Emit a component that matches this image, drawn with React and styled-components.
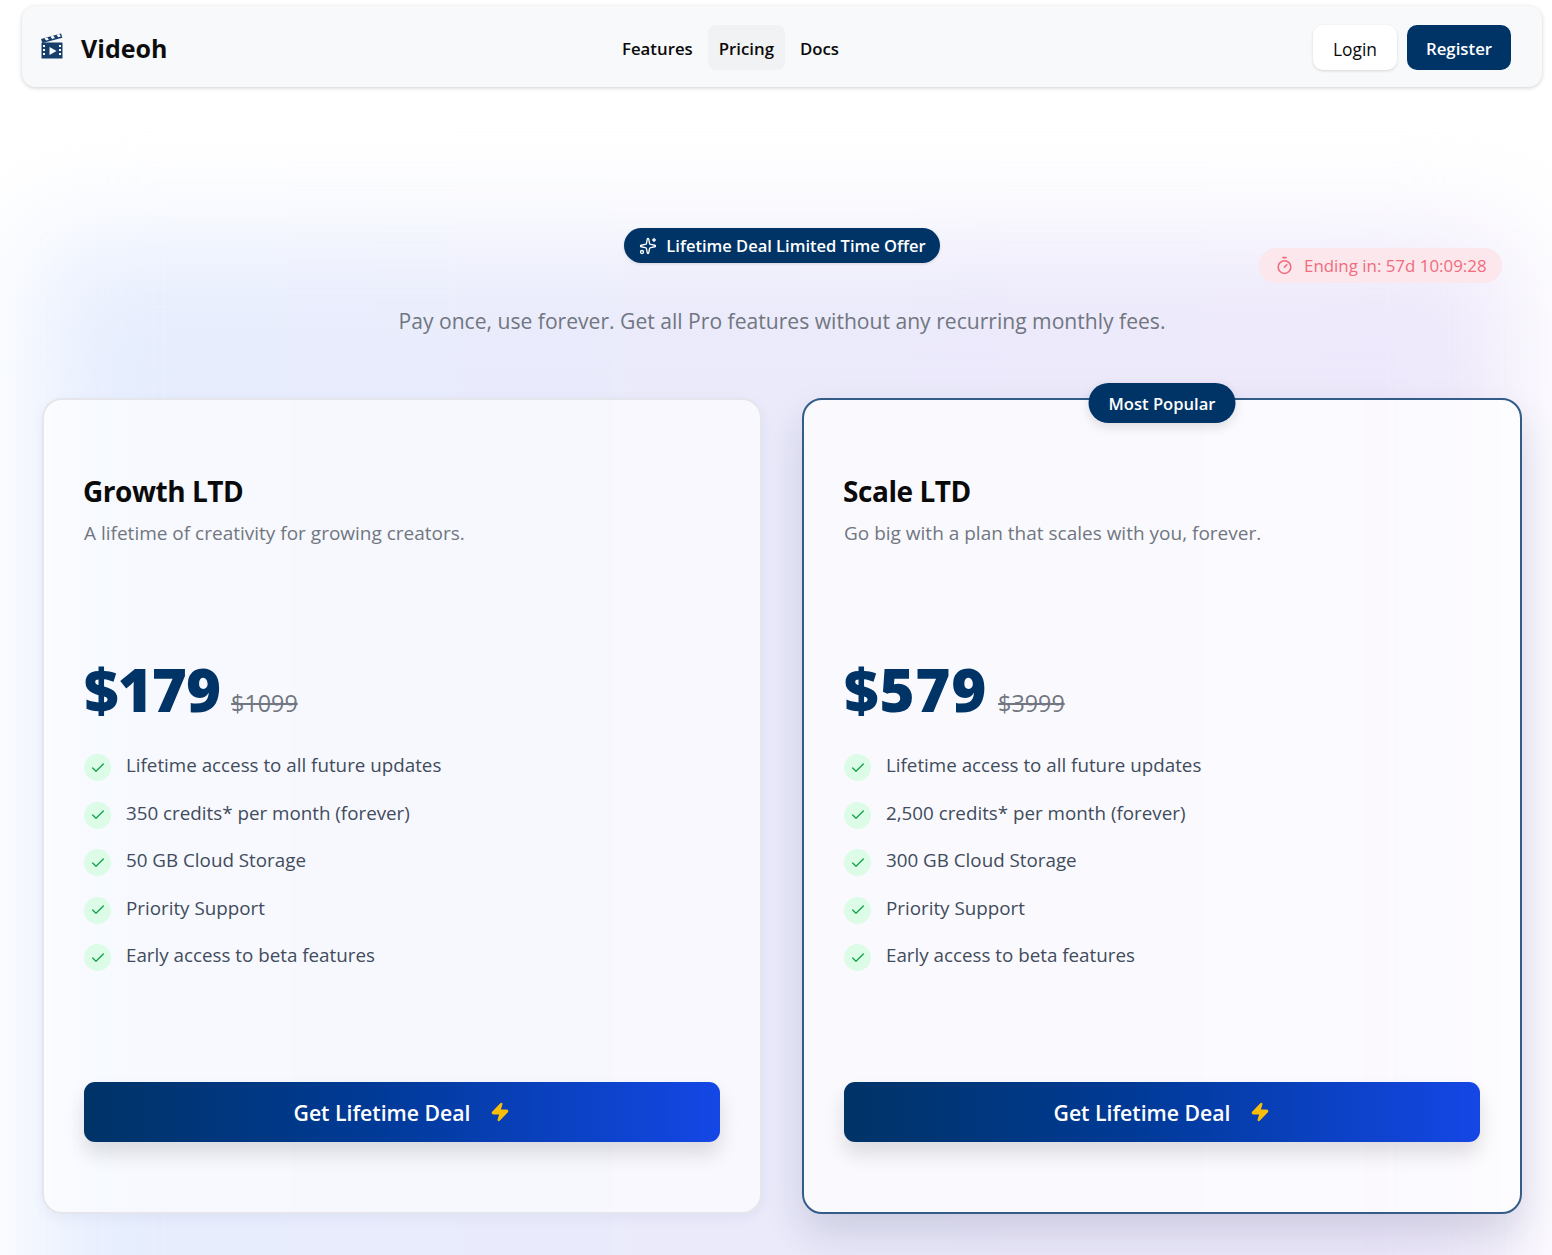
import styled, { createGlobalStyle } from "styled-components";
import { Check, Sparkles, Timer, Zap } from "lucide-react";

const GlobalStyle = createGlobalStyle`
  html, body {
    margin: 0;
    padding: 0;
    background: #ffffff;
    font-family: "Open Sans", "Noto Sans", sans-serif;
  }
  * { box-sizing: border-box; }
`;

const plans = [
  {
    name: "Growth LTD",
    text: "A lifetime of creativity for growing creators.",
    price: "$179",
    tracking: -1,
    old: "$1099",
    credits: "350 credits* per month (forever)",
    storage: "50 GB Cloud Storage",
  },
  {
    name: "Scale LTD",
    text: "Go big with a plan that scales with you, forever.",
    price: "$579",
    tracking: 0.75,
    old: "$3999",
    credits: "2,500 credits* per month (forever)",
    storage: "300 GB Cloud Storage",
    popular: true,
  },
];

function Logo() {
  return (
    <svg width="24" height="26" viewBox="0 0 24 26">
      <g fill="#163f6c">
        <path d="M1 6 21 .5l1.4 4.2L2.4 10z" />
        <rect x="1.5" y="9.5" width="21" height="16" rx="0.5" />
      </g>
      <g fill="#ffffff">
        <path d="M4.5 5.2 7.3 4.4l1.6 2.4-2.8.8zM10.5 3.5l2.8-.8 1.6 2.4-2.8.8zM16.5 1.8l2.8-.8 1.6 2.4-2.8.8z" />
        <path d="M9.5 14 16.5 18l-7 4z" />
        <rect x="3" y="12" width="2" height="2" />
        <rect x="3" y="16" width="2" height="2" />
        <rect x="3" y="20" width="2" height="2" />
        <rect x="19" y="12" width="2" height="2" />
        <rect x="19" y="16" width="2" height="2" />
        <rect x="19" y="20" width="2" height="2" />
      </g>
    </svg>
  );
}

function Plan({ plan }) {
  const features = [
    "Lifetime access to all future updates",
    plan.credits,
    plan.storage,
    "Priority Support",
    "Early access to beta features",
  ];
  return (
    <Card $popular={plan.popular}>
      {plan.popular && <PopularBadge>Most Popular</PopularBadge>}
      <PlanName>{plan.name}</PlanName>
      <PlanText>{plan.text}</PlanText>
      <PriceRow>
        <Price $tracking={plan.tracking}>{plan.price}</Price>
        <OldPrice>{plan.old}</OldPrice>
      </PriceRow>
      <Features>
        {features.map((f) => (
          <Feature key={f}>
            <CheckDot>
              <Check size={16} color="#16a34a" strokeWidth={2} />
            </CheckDot>
            <span>{f}</span>
          </Feature>
        ))}
      </Features>
      <DealButton>
        Get Lifetime Deal
        <Zap size={20} color="#fbbf09" fill="#fbbf09" />
      </DealButton>
    </Card>
  );
}

export default function App() {
  return (
    <>
      <GlobalStyle />
      <Nav>
        <Brand>
          <Logo />
          <BrandName>Videoh</BrandName>
        </Brand>
        <Links>
          <NavLink>Features</NavLink>
          <NavLink $active>Pricing</NavLink>
          <NavLink>Docs</NavLink>
        </Links>
        <Actions>
          <LoginButton>Login</LoginButton>
          <RegisterButton>Register</RegisterButton>
        </Actions>
      </Nav>
      <Hero>
        <Glow />
        <Offer>
          <Sparkles size={18} strokeWidth={1.75} />
          Lifetime Deal Limited Time Offer
        </Offer>
        <Ending>
          <Timer size={19} strokeWidth={2} />
          Ending in: 57d 10:09:28
        </Ending>
        <Lead>Pay once, use forever. Get all Pro features without any recurring monthly fees.</Lead>
        <Cards>
          {plans.map((p) => (
            <Plan key={p.name} plan={p} />
          ))}
        </Cards>
      </Hero>
    </>
  );
}

const Nav = styled.nav`
  width: 1520px;
  height: 81px;
  margin: 6px 0 0 22px;
  padding: 2px 31px 0 18px;
  display: flex;
  align-items: center;
  background: #f8f9fb;
  border-radius: 14px;
  box-shadow: 0 1px 4px rgba(0, 0, 0, 0.18);
  position: relative;
  z-index: 1;
`;

const Brand = styled.div`
  width: 571px;
  display: flex;
  align-items: center;
  gap: 17px;
  margin-top: -4px;
`;

const BrandName = styled.span`
  font-size: 25px;
  font-weight: 700;
  color: #0d0d0d;
  margin-top: 4px;
`;

const Links = styled.div`
  display: flex;
  align-items: center;
  gap: 4px;
`;

const NavLink = styled.a`
  padding: 0 11px;
  height: 45px;
  line-height: 47px;
  font-size: 16.8px;
  font-weight: 600;
  color: #0a0a0a;
  border-radius: 8px;
  background: ${(p) => (p.$active ? "#f1f2f4" : "transparent")};
`;

const Actions = styled.div`
  margin-left: auto;
  display: flex;
  gap: 10px;
`;

const LoginButton = styled.button`
  width: 84px;
  height: 45px;
  padding: 2px 0 0;
  border: 0;
  border-radius: 10px;
  background: #ffffff;
  font: 500 17.4px "Open Sans", sans-serif;
  color: #0a0a0a;
  box-shadow: 0 1px 3px rgba(0, 0, 0, 0.14);
`;

const RegisterButton = styled.button`
  width: 104px;
  height: 45px;
  padding: 2px 0 0;
  border: 0;
  border-radius: 10px;
  background: #003366;
  font: 600 16.8px "Open Sans", sans-serif;
  color: #ffffff;
`;

const Hero = styled.main`
  position: relative;
  height: 1168px;
  padding: 141px 30px 0 42px;
  display: flex;
  flex-direction: column;
  align-items: center;
  overflow: hidden;
`;

const Glow = styled.div`
  position: absolute;
  top: 150px;
  left: 35px;
  right: 35px;
  bottom: -160px;
  background: linear-gradient(90deg, #e6eefe 0%, #eaeafb 45%, #eee8fb 100%);
  filter: blur(55px);
`;

const Offer = styled.div`
  position: relative;
  height: 35px;
  padding: 0 14px 0 15px;
  display: flex;
  align-items: center;
  gap: 9px;
  border-radius: 18px;
  background: #003366;
  color: #ffffff;
  font-size: 16.5px;
  font-weight: 600;
  box-shadow: 0 1px 3px rgba(0, 0, 0, 0.12);
`;

const Ending = styled.div`
  position: absolute;
  top: 161px;
  left: 1259px;
  height: 35px;
  width: 243px;
  padding: 0 14px 0 16px;
  display: flex;
  align-items: center;
  gap: 10px;
  border-radius: 18px;
  background: #fbe7ec;
  color: #f16c7c;
  font-size: 16.9px;
  font-weight: 500;
`;

const Lead = styled.p`
  position: relative;
  margin: 42px 0 0;
  font-size: 21.1px;
  line-height: 32px;
  color: #717680;
`;

const Cards = styled.div`
  position: relative;
  width: 100%;
  margin-top: 61px;
  display: grid;
  grid-template-columns: 720px 720px;
  column-gap: 40px;
`;

const Card = styled.section`
  position: relative;
  height: 816px;
  padding: 73px 40px 0 40px;
  display: flex;
  flex-direction: column;
  border-radius: 20px;
  background: rgba(255, 255, 255, ${(p) => (p.$popular ? 0.75 : 0.65)});
  border: ${(p) => (p.$popular ? "2px solid #335c88" : "2px solid #e5e6eb")};
  box-shadow: ${(p) => (p.$popular ? "0 20px 40px rgba(20, 30, 70, 0.14)" : "0 4px 14px rgba(30, 40, 90, 0.05)")};
`;

const PopularBadge = styled.div`
  position: absolute;
  top: -17px;
  left: 50%;
  transform: translateX(-50%);
  height: 40px;
  padding: 0 20px;
  display: flex;
  align-items: center;
  border-radius: 20px;
  background: #003366;
  color: #ffffff;
  font-size: 16.6px;
  font-weight: 600;
  box-shadow: 0 4px 12px rgba(0, 0, 0, 0.12);
`;

const PlanName = styled.h2`
  margin: 0 0 0 -1px;
  font-size: 28px;
  line-height: 36px;
  font-weight: 700;
  letter-spacing: -0.45px;
  color: #0a0a0a;
`;

const PlanText = styled.p`
  margin: 10px 0 0;
  font-size: 19px;
  line-height: 28px;
  color: #717680;
`;

const PriceRow = styled.div`
  margin-top: 106px;
  display: flex;
  align-items: baseline;
  gap: 11px;
`;

const Price = styled.span`
  font-size: 60px;
  line-height: 72px;
  font-weight: 800;
  letter-spacing: ${(p) => p.$tracking}px;
  color: #003366;
`;

const OldPrice = styled.span`
  font-size: 23.3px;
  color: #717680;
  text-decoration: line-through;
`;

const Features = styled.ul`
  list-style: none;
  margin: 26px 0 0;
  padding: 0;
  display: flex;
  flex-direction: column;
  gap: 17.5px;
`;

const Feature = styled.li`
  display: flex;
  align-items: flex-start;
  gap: 15px;
  font-size: 18.8px;
  line-height: 28px;
  color: #414b5c;
`;

const CheckDot = styled.span`
  width: 27px;
  height: 27px;
  margin-top: 3px;
  flex: none;
  display: flex;
  align-items: center;
  justify-content: center;
  border-radius: 50%;
  background: #dcfce7;
`;

const DealButton = styled.button`
  position: absolute;
  left: 40px;
  right: 40px;
  bottom: 70px;
  height: 60px;
  display: flex;
  align-items: center;
  justify-content: center;
  gap: 20px;
  border: 0;
  border-radius: 11px;
  background: linear-gradient(90deg, #003366, #003a96 45%, #1447e6);
  color: #ffffff;
  font: 600 21.2px "Open Sans", sans-serif;
  box-shadow: 0 12px 20px rgba(0, 0, 0, 0.12);
`;
